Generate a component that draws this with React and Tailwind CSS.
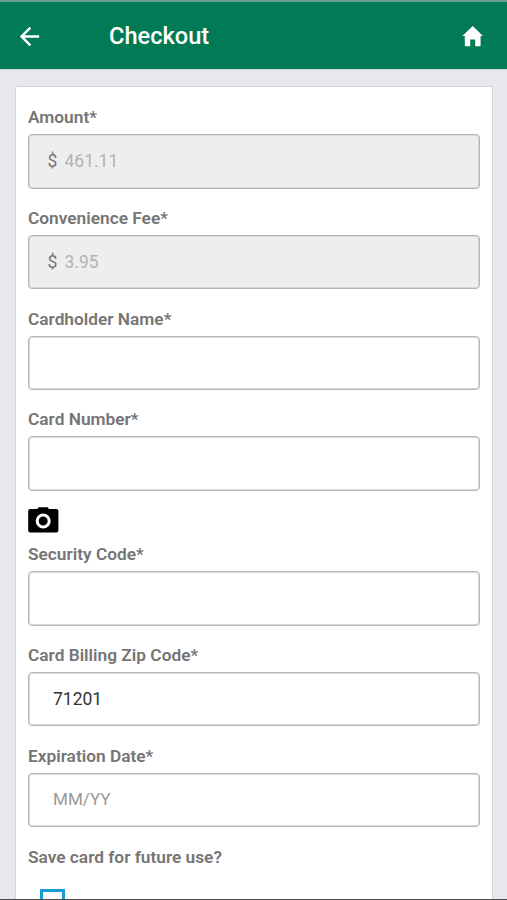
import React from 'react';
import { MdArrowBack } from 'react-icons/md';

const HomeIcon = () => (
    <svg width="22" height="21" viewBox="0 0 22 21" fill="currentColor" aria-hidden="true">
        <path d="M10.7 0 21 10H18.6V19.2Q18.6 20.2 17.6 20.2H13.8Q13.2 20.2 13.2 19.6V13.4H8.2V19.6Q8.2 20.2 7.6 20.2H3.8Q2.8 20.2 2.8 19.2V10H0.4Z" />
    </svg>
);

const CameraIcon = () => (
    <svg width="31" height="27" viewBox="0 0 31 27" className="-mt-[2px]" aria-hidden="true">
        <path d="M10.6 0.2H19.6L21 2H28.4Q30.4 2 30.4 4V23.4Q30.4 25.4 28.4 25.4H2.2Q0.2 25.4 0.2 23.4V4Q0.2 2 2.2 2H9.2Z" fill="#000" />
        <circle cx="15.2" cy="14" r="6" fill="none" stroke="#fff" strokeWidth="3" />
    </svg>
);

const Field = ({ label, prefix, value, placeholder, disabled }) => (
    <div className="mb-[18.3px]">
        <label className="block h-6 mb-1 text-[17.3px] leading-[23px] font-semibold text-[#757575]">{label}</label>
        <div
            className={`flex items-center h-[54.5px] border rounded-[4px] text-[17.5px] shadow-[inset_0_0_0_1px_#d8d8d8] ${disabled
                ? 'bg-[#eeeeee] border-[#b4b4b4] pl-[18.5px]'
                : 'bg-white border-[#b8b8b8] pl-6'
                }`}
        >
            {prefix && <span className="w-[17px] text-[#777777]">{prefix}</span>}
            <span className={disabled ? 'text-[#b3b3b3]' : 'text-[#333333]'}>{value}</span>
            {placeholder && <span className="text-[17.1px] text-[#999999]">{placeholder}</span>}
        </div>
    </div>
);

const App = () => {
    return (
        <div className="flex flex-col w-[507px] h-[900px] overflow-hidden bg-[#e8e7ee] border-b border-[#4a4a4c] font-['Roboto',sans-serif]">
            <header className="flex items-center shrink-0 h-[69px] pt-px pl-[15px] pr-[23px] bg-[#007b55] border-t-2 border-[#689f8d] text-white shadow-[0_1px_1px_rgba(0,0,0,0.08)]">
                <MdArrowBack size={29} />
                <h1 className="flex-1 ml-[65px] text-[23.6px] leading-8 font-medium">Checkout</h1>
                <HomeIcon />
            </header>

            {/* Payment card, runs past the bottom of the screen */}
            <main className="flex-1 min-h-0 mt-[18px] ml-4 mr-[15px] pl-3 pr-3 pt-[19px] bg-white rounded-t-[2px] shadow-[0_0_1px_1px_rgba(0,0,0,0.09)]">
                <Field label="Amount*" prefix="$" value="461.11" disabled />
                <Field label="Convenience Fee*" prefix="$" value="3.95" disabled />
                <Field label="Cardholder Name*" />
                <Field label="Card Number*" />
                <div className="flex items-start h-[34px]">
                    <CameraIcon />
                </div>
                <Field label="Security Code*" />
                <Field label="Card Billing Zip Code*" value="71201" />
                <Field label="Expiration Date*" placeholder="MM/YY" />
                <p className="h-6 text-[17.3px] leading-[23px] font-semibold text-[#757575]">Save card for future use?</p>
                <div className="mt-[19px] ml-3 size-[25px] border-3 border-[#1b9ad6]" />
            </main>
        </div>
    );
};

export default App;
